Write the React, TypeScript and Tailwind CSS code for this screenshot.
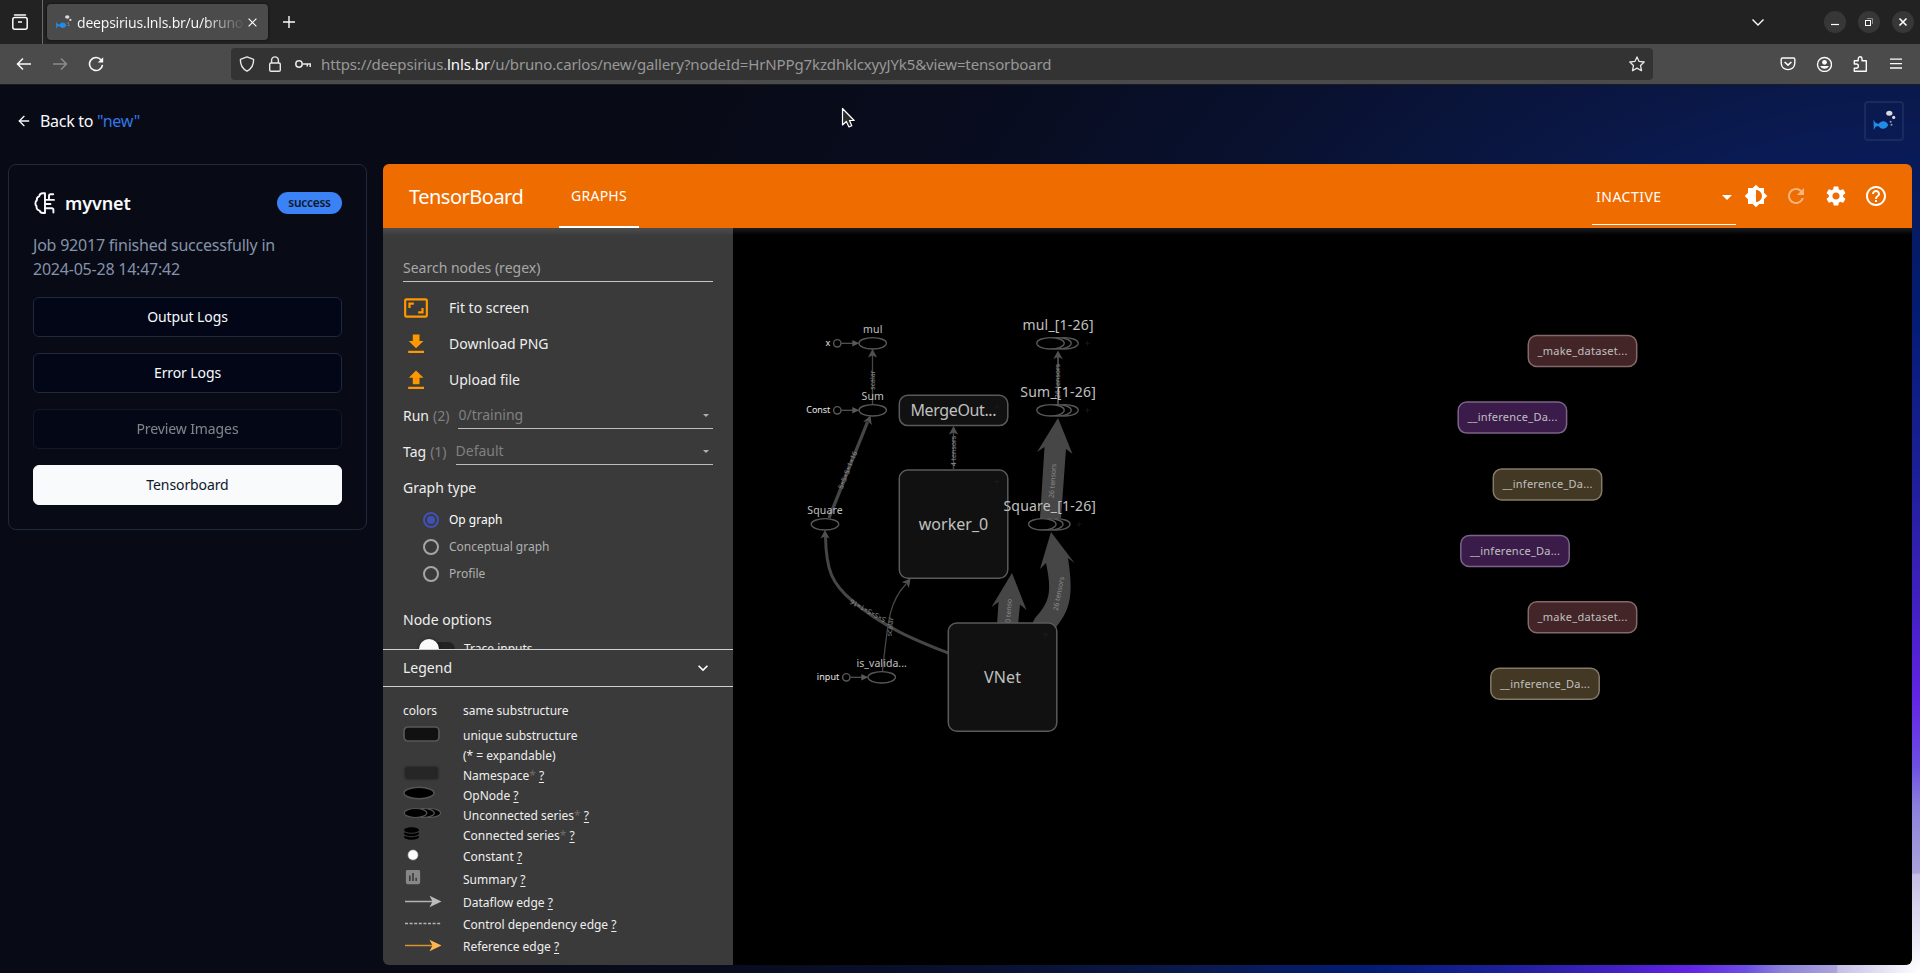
import React from "react";
import { ArrowLeft } from "lucide-react";
import {
  MdBrightness6,
  MdRefresh,
  MdSettings,
  MdHelpOutline,
  MdExpandMore,
  MdAspectRatio,
  MdAssessment,
  MdArrowDropDown,
} from "react-icons/md";

const EDGE = "#464646";

function Fish({ className }: { className: string }) {
  return (
    <svg className={className} viewBox="0 0 24 24">
      <path d="M1.5 10.5 L3.2 13.6 L6.5 15 C8 12.8 10 12 11.8 12.2 C14 12.4 15.6 14 16.3 16 C15.2 18.4 13 20 10.8 19.8 C9 19.8 7.4 18.6 6.5 17 L3.6 17.8 L1.8 21 Z" fill="#228be6" />
      <ellipse cx="17.3" cy="4.2" rx="3.1" ry="2.5" fill="#d8dae0" />
      <circle cx="21.7" cy="8.4" r="1.6" fill="#d8dae0" />
      <circle cx="18.6" cy="12.8" r="1" fill="#9aa0ad" />
      <circle cx="19.5" cy="15.8" r="1" fill="#9aa0ad" />
    </svg>
  );
}

function BrowserTabs() {
  return (
    <div className="flex h-11 items-center bg-[#222222]">
      <div className="flex h-full w-[43px] items-center border-r border-[#6a6a6a] pl-3">
        <svg className="size-4" viewBox="0 0 16 16" fill="none" stroke="#fbfbfe" strokeWidth="1.5">
          <path d="M2.5 .9h11" strokeLinecap="round" />
          <rect x=".8" y="3.5" width="14.4" height="11.7" rx="2" />
          <path d="M6 8h4" />
        </svg>
      </div>
      <div className="ml-1 flex h-9 w-[221px] items-center rounded bg-[#4b4b4b] pl-2 shadow-[0_0_3px_rgba(0,0,0,0.6)]">
        <Fish className="size-[17px] shrink-0" />
        <span className="ml-[5px] w-[169px] whitespace-nowrap bg-gradient-to-r from-[#fbfbfe] from-75% to-[#4b4b4b] bg-clip-text text-[14px] tracking-[-0.22px] text-transparent">
          deepsirius.lnls.br/u/bruno
        </span>
        <svg className="ml-[2px] size-[9px] shrink-0" viewBox="0 0 9 9" stroke="#fbfbfe" strokeWidth="1.2">
          <path d="M.6 .6 L8.4 8.4 M8.4 .6 L.6 8.4" />
        </svg>
      </div>
      <svg className="ml-[15px] size-3" viewBox="0 0 12 12" stroke="#fbfbfe" strokeWidth="1.4">
        <path d="M6 0V12M0 6H12" />
      </svg>
      <svg className="ml-auto mr-[60px] h-[7px] w-3" viewBox="0 0 12 7" fill="none" stroke="#fbfbfe" strokeWidth="1.4">
        <path d="M.5 .5 L6 6 L11.5 .5" />
      </svg>
      <div className="flex gap-3 pr-[6px]">
        <div className="flex size-[22px] items-center justify-center rounded-full bg-[#373737]">
          <svg className="size-3" viewBox="0 0 12 12" stroke="#fff" strokeWidth="1.2"><path d="M2 8.5H10" /></svg>
        </div>
        <div className="flex size-[22px] items-center justify-center rounded-full bg-[#373737]">
          <svg className="size-3" viewBox="0 0 12 12" fill="none">
            <rect x="2.5" y="4.5" width="5" height="5" stroke="#fff" />
            <path d="M4 2.5H9.5V8" stroke="#8a8a8a" />
          </svg>
        </div>
        <div className="flex size-[22px] items-center justify-center rounded-full bg-[#373737]">
          <svg className="size-3" viewBox="0 0 12 12" stroke="#fff" strokeWidth="1.6"><path d="M2.5 2.5L9.5 9.5M9.5 2.5L2.5 9.5" /></svg>
        </div>
      </div>
    </div>
  );
}

function BrowserToolbar() {
  return (
    <div className="flex h-[41px] items-center border-b border-[#1c1c1c] bg-[#4b4b4b]">
      <svg className="ml-4 size-4" viewBox="0 0 16 16" fill="none" stroke="#fbfbfe" strokeWidth="1.5">
        <path d="M15 8H1.5M7 2.5L1.5 8L7 13.5" />
      </svg>
      <svg className="ml-5 size-4" viewBox="0 0 16 16" fill="none" stroke="#8c8c8c" strokeWidth="1.5">
        <path d="M1 8H14.5M9 2.5L14.5 8L9 13.5" />
      </svg>
      <svg className="ml-5 size-4" viewBox="0 0 16 16" fill="none" stroke="#fbfbfe" strokeWidth="1.6">
        <path d="M13 3.8A6.5 6.5 0 1 0 14.5 8.8" />
        <path d="M15.2 1.2V6.6H9.8Z" fill="#fbfbfe" stroke="none" />
      </svg>
      <div className="ml-[127px] flex h-8 w-[1422px] items-center rounded bg-[#333333] pl-2">
        <svg className="size-4" viewBox="0 0 16 16" fill="none" stroke="#e8e8ea" strokeWidth="1.4">
          <path d="M8 .9L14.6 3.3C14.8 9 12.6 12.8 8 15.2C3.4 12.8 1.2 9 1.4 3.3Z" strokeLinejoin="round" />
        </svg>
        <svg className="ml-3 size-4" viewBox="0 0 16 16" fill="none" stroke="#e8e8ea" strokeWidth="1.4">
          <rect x="2.7" y="7" width="10.6" height="8.2" rx="1.3" />
          <path d="M4.6 7V4.2C4.6 -.2 11.4 -.2 11.4 4.2V7" />
        </svg>
        <svg className="ml-3 size-4" viewBox="0 0 16 16" fill="none" stroke="#e8e8ea" strokeWidth="1.5">
          <circle cx="4" cy="8" r="3.2" />
          <path d="M7.2 8H15.3V11M12.3 8V10.5" />
        </svg>
        <div className="ml-[10px] whitespace-nowrap text-[15px] tracking-[-0.135px] text-[#989898]">
          https://deepsirius.<span className="text-[#fbfbfe]">lnls.br</span>/u/bruno.carlos/new/gallery?nodeId=HrNPPg7kzdhklcxyyJYk5&amp;view=tensorboard
        </div>
        <svg className="ml-auto mr-2 size-4" viewBox="0 0 16 16" fill="none" stroke="#e8e8ea" strokeWidth="1.3" strokeLinejoin="round">
          <path d="M8 .9L10.1 5.4L15.2 6L11.5 9.4L12.5 14.7L8 12.1L3.5 14.7L4.5 9.4L.8 6L5.9 5.4Z" />
        </svg>
      </div>
      <div className="ml-auto flex items-center gap-5 pr-4">
        <svg className="size-4" viewBox="0 0 16 16" fill="none" stroke="#fbfbfe" strokeWidth="1.4">
          <path d="M2.4 2H13.6Q14.8 2 14.8 3.2V7C14.8 15.8 1.2 15.8 1.2 7V3.2Q1.2 2 2.4 2Z" />
          <path d="M4.6 6L8 9.2L11.4 6" strokeWidth="1.6" />
        </svg>
        <svg className="size-4" viewBox="0 0 16 16" fill="none">
          <circle cx="8.500" cy="8.500" r="7" stroke="#fbfbfe" strokeWidth="1.4" />
          <circle cx="8.500" cy="6.300" r="2.4" fill="#fbfbfe" />
          <path d="M4.2 10.100H12.8C12.1 13.500 4.9 13.500 4.2 10.100Z" fill="#fbfbfe" />
        </svg>
        <svg className="size-4" viewBox="0 0 16 16" fill="none" stroke="#fbfbfe" strokeWidth="1.4" strokeLinejoin="round">
          <path d="M2.300 8V4.8H6.2V3.2C6.2 0 10 0 10 3.2V4.8H14.3V15.2H2.300V12.2H4.300C7.100 12.2 7.100 8 4.300 8Z" />
        </svg>
        <svg className="size-4" viewBox="0 0 16 16" stroke="#fbfbfe" strokeWidth="1.3">
          <path d="M2 3.2H14M2 7.6H14M2 12H14" />
        </svg>
      </div>
    </div>
  );
}

function HalfBrain() {
  return (
    <svg className="size-6" viewBox="0 0 24 24" fill="none" stroke="#f8fafc" strokeWidth="1.9" strokeLinejoin="round" strokeLinecap="round">
      <path d="M12 2.200H9.800C7.800 2.200 6.500 3.500 6.300 5.100C4.300 6 3.500 7.700 3.900 9.300C2 10.900 1.900 13.500 3.500 15.200C3.300 17.600 4.600 19.300 6.600 19.600C7.100 21.200 8.300 22 9.800 22H12Z" />
      <path d="M12 8.900H21M16 8.900V4.700Q16 3.300 17.500 3.300H20.200" />
      <path d="M12 13H17.500" />
      <path d="M12 17.200H18.700Q20.400 17.200 20.400 18.800V21.500" />
    </svg>
  );
}

function JobCard() {
  const button = "flex h-10 items-center justify-center rounded-md border text-sm tracking-[-0.1px]";
  return (
    <div className="flex h-[366px] w-[359px] shrink-0 flex-col gap-4 rounded-lg border border-[#1e293b] p-6">
      <div className="flex h-7 items-center">
        <HalfBrain />
        <span className="ml-2 text-lg font-semibold tracking-[-0.1px] text-[#f8fafc]">myvnet</span>
        <span className="ml-auto flex h-[22px] w-[65px] items-center justify-center rounded-full bg-[#3b82f6] text-xs font-semibold tracking-[-0.3px] text-[#0f172a]">
          success
        </span>
      </div>
      <p className="whitespace-nowrap text-base leading-6 tracking-[-0.22px] text-[#8593a8]">
        Job 92017 finished successfully in
        <br />
        2024-05-28 14:47:42
      </p>
      <div className="flex flex-col gap-4">
        <div className={`${button} border-[#1e293b] bg-[#020617] text-[#f8fafc]`}>Output Logs</div>
        <div className={`${button} border-[#1e293b] bg-[#020617] text-[#f8fafc]`}>Error Logs</div>
        <div className={`${button} border-[#1e293b] bg-[#020617] text-[#f8fafc] opacity-50`}>Preview Images</div>
        <div className={`${button} border-[#f8fafc] bg-[#f8fafc] text-[#0f172a]`}>Tensorboard</div>
      </div>
    </div>
  );
}

function BoardHeader() {
  return (
    <div className="flex h-16 shrink-0 bg-[#ef6c00] text-white">
      <div className="flex w-[176px] items-center pl-[26px] pt-px text-[20px] tracking-[-0.5px]">TensorBoard</div>
      <div className="flex w-20 items-center justify-center border-b-2 border-white pt-px text-sm tracking-[0.25px]">GRAPHS</div>
      <div className="ml-auto mb-[3px] flex w-36 items-center border-b border-white pl-1 pt-[5px] text-sm tracking-[0.5px]">
        INACTIVE
        <MdArrowDropDown className="ml-auto -mr-[3px] size-6" />
      </div>
      <div className="flex items-center gap-4 pl-2 pr-6">
        <MdBrightness6 className="size-6" />
        <MdRefresh className="size-6 text-white/50" />
        <MdSettings className="size-6" />
        <MdHelpOutline className="size-6" />
      </div>
    </div>
  );
}

function SelectRow({ name, count, value }: { name: string; count: string; value: string }) {
  return (
    <div className="flex h-9 items-center text-sm">
      <span>{name}</span>
      <span className="ml-1 text-[#808080]">({count})</span>
      <div className="ml-[9px] flex h-[25px] flex-1 items-center border-b border-[#bdbdbd] text-[#808080]">
        <span className="pb-[2px]">{value}</span>
        <svg className="ml-auto mr-1 h-[3px] w-[6px]" viewBox="0 0 6 3"><path d="M0 0H6L3 3Z" fill="#b0b0b0" /></svg>
      </div>
    </div>
  );
}

function Radio({ label, checked }: { label: string; checked?: boolean }) {
  return (
    <div className={checked ? "flex h-[27px] items-center text-xs text-white" : "flex h-[27px] items-center text-xs text-[#b0b0b0]"}>
      <svg className="mr-[10px] size-4" viewBox="0 0 16 16" fill="none">
        <circle cx="8" cy="8" r="7" strokeWidth="2" stroke={checked ? "#3f51b5" : "#a6a6a6"} />
        {checked && <circle cx="8" cy="8" r="4" fill="#3f51b5" />}
      </svg>
      {label}
    </div>
  );
}

function LegendRow({ h, label, star, help = true, children }: { h: string; label: string; star?: boolean; help?: boolean; children?: React.ReactNode }) {
  return (
    <div className={`flex items-center ${h}`}>
      <svg className="h-6 w-[60px] shrink-0" viewBox="0 0 60 24" fill="none">{children}</svg>
      <span className="tracking-[-0.01px]">
        {label}
        {star && <span className="text-[#6c6c6c]">*</span>}
        {help && <> <span className="underline underline-offset-2">?</span></>}
      </span>
    </div>
  );
}

function Sidebar() {
  return (
    <div className="flex w-[350px] shrink-0 flex-col bg-[#3a3a3a] text-[#eeeeee]">
      <div className="h-[421px] overflow-hidden bg-gradient-to-b from-[#4d4d4d] to-[#3a3a3a] to-[8px] px-5 pt-[26px]">
        <div className="mb-2 flex h-7 items-center border-b border-[#c4c4c4] text-sm text-[#a8a8a8]">Search nodes (regex)</div>
        <div className="flex h-9 items-center text-sm">
          <MdAspectRatio className="mr-5 size-[26px] text-[#ff9800]" />Fit to screen
        </div>
        <div className="flex h-9 items-center text-sm">
          <svg className="mr-5 h-6 w-[26px]" viewBox="0 0 26 24" fill="#ff9800"><path d="M20.500 9H16.500V2.500H9.800V9H5.800L13 16.300ZM5.200 18.700V21H21V18.700Z" /></svg>
          Download PNG
        </div>
        <div className="flex h-9 items-center text-sm">
          <svg className="mr-5 h-6 w-[26px]" viewBox="0 0 26 24" fill="#ff9800"><path d="M9.800 16.300H16.500V9.700H20.500L13 2.500L5.800 9.700H9.800ZM5.200 18.700V21H21V18.700Z" /></svg>
          Upload file
        </div>
        <SelectRow name="Run" count="2" value="0/training" />
        <SelectRow name="Tag" count="1" value="Default" />
        <div className="flex h-9 items-center text-sm">Graph type</div>
        <div className="pl-5">
          <Radio label="Op graph" checked />
          <Radio label="Conceptual graph" />
          <Radio label="Profile" />
        </div>
        <div className="mt-[15px] flex h-9 items-center text-sm">Node options</div>
        <div className="flex items-start pl-4">
          <div className="mt-px flex h-5 w-9">
            <div className="z-10 size-5 shrink-0 rounded-full bg-[#fafafa] shadow-[0_1px_4px_rgba(0,0,0,0.6)]" />
            <div className="-ml-4 mt-[3px] h-[14px] w-8 rounded-full bg-[#222222]" />
          </div>
          <span className="ml-[9px] mt-[3px] text-xs">Trace inputs</span>
        </div>
      </div>
      <div className="flex h-[38px] items-center justify-between border-y border-[#d0d0d0] pl-5 pr-5 text-sm">
        Legend
        <MdExpandMore className="size-5 text-white" />
      </div>
      <div className="px-5 pt-[14px] text-xs">
        <div className="mb-[5px] flex h-5 items-center"><span className="w-[60px]">colors</span>same substructure</div>
        <LegendRow h="h-5" label="unique substructure" help={false}><rect x="1" y="3" width="35" height="14" rx="4" fill="#111" stroke="#585858" strokeWidth="1.7" /></LegendRow>
        <LegendRow h="h-5" label="(* = expandable)" help={false} />
        <LegendRow h="h-5" label="Namespace" star><rect x="1" y="2" width="35" height="14" rx="4" fill="#262626" stroke="#343434" strokeWidth="1.7" /></LegendRow>
        <LegendRow h="h-5" label="OpNode"><ellipse cx="16" cy="9" rx="15" ry="5.700" fill="#000" stroke="#555" strokeWidth="1.500" /></LegendRow>
        <LegendRow h="h-5" label="Unconnected series" star>
          <g fill="#000" stroke="#555" strokeWidth="1.200"><ellipse cx="26.300" cy="9" rx="11.300" ry="4.500" /><ellipse cx="20" cy="9" rx="11.300" ry="4.500" /><ellipse cx="12.500" cy="9" rx="11.300" ry="4.500" /></g>
        </LegendRow>
        <LegendRow h="h-5" label="Connected series" star>
          <g fill="#000" stroke="#3e3e3e" strokeWidth="1"><ellipse cx="8.500" cy="13" rx="8" ry="3.300" /><ellipse cx="8.500" cy="9.500" rx="8" ry="3.300" /><ellipse cx="8.500" cy="6" rx="8" ry="3.300" /></g>
        </LegendRow>
        <LegendRow h="h-[22px]" label="Constant"><circle cx="10" cy="10" r="5" fill="#fff" stroke="#bbb" strokeWidth=".6" /></LegendRow>
        <LegendRow h="h-6" label="Summary"><MdAssessment x={0.5} y={-0.5} size={19} color="#878787" /></LegendRow>
        <LegendRow h="h-[22px]" label="Dataflow edge"><path d="M2 10.500H30" stroke="#b4b4b4" strokeWidth="1.700" /><path d="M38.500 10.500L26.500 4.800L29.500 10.500L26.500 16.200Z" fill="#bbb" /></LegendRow>
        <LegendRow h="h-[22px]" label="Control dependency edge"><path d="M2 10.500H38" stroke="#b4b4b4" strokeWidth="1.400" strokeDasharray="3 1.600" /></LegendRow>
        <LegendRow h="h-[22px]" label="Reference edge"><path d="M2 10.500H30" stroke="#d6952f" strokeWidth="1.700" /><path d="M38.500 10.500L26.500 4.800L29.500 10.500L26.500 16.200Z" fill="#ffb74d" /></LegendRow>
      </div>
    </div>
  );
}

function Label({ x, y, w, size, fill = "#c0c0c0", anchor = "middle", children }: { x: number; y: number; w: number; size: number; fill?: string; anchor?: "middle" | "end"; children: string }) {
  return <text x={x} y={y} textLength={w} fontSize={size} fill={fill} textAnchor={anchor}>{children}</text>;
}

function Op({ x, y }: { x: number; y: number }) {
  return <ellipse cx={x} cy={y} rx="13.700" ry="5.700" fill="#000" stroke="#585858" strokeWidth="1.400" />;
}

function Series({ x, y }: { x: number; y: number }) {
  return (
    <g>
      <path d={`M${x + 34.500} ${y}h5M${x + 37} ${y - 2.500}v5`} stroke="#141414" />
      <Op x={x + 14} y={y} /><Op x={x + 7} y={y} /><Op x={x} y={y} />
    </g>
  );
}

function Input({ x, y, label, w }: { x: number; y: number; label: string; w: number }) {
  return (
    <g>
      <Label x={x - 7} y={y + 2.800} w={w} size={9} fill="#e8e8e8" anchor="end">{label}</Label>
      <path d={`M${x + 4} ${y}H${x + 16}`} stroke="#585858" strokeWidth="1.200" />
      <path d={`M${x + 15} ${y - 3.200}L${x + 22} ${y}L${x + 15} ${y + 3.200}Z`} fill="#585858" />
      <circle cx={x} cy={y} r="3.700" fill="#000" stroke="#585858" strokeWidth="1.400" />
    </g>
  );
}

function Head({ x, y, angle = 0 }: { x: number; y: number; angle?: number }) {
  return <path transform={`translate(${x} ${y}) rotate(${angle})`} d="M0 0L4.600 8.500L0 6.500L-4.600 8.500Z" fill="#505050" />;
}

function EdgeText({ x, y, angle, size = 7, children }: { x: number; y: number; angle: number; size?: number; children: string }) {
  return <text transform={`translate(${x} ${y}) rotate(${angle})`} textAnchor="middle" fontSize={size} fill="#8c8c8c">{children}</text>;
}

function Box({ x, y, w = 108.5, h }: { x: number; y: number; w?: number; h: number }) {
  return (
    <g>
      <rect x={x} y={y} width={w} height={h} rx="8.500" fill="#111" stroke="#5a5a5a" strokeWidth="1.500" />
      <path d={`M${x + w - 13.500} ${y + 11.500}h5M${x + w - 11} ${y + 9}v5`} stroke="#1b1b1b" />
    </g>
  );
}

const functions = [
  { x: 1582.5, y: 351, label: "_make_dataset...", fill: "#432427", stroke: "#84696b" },
  { x: 1512.4, y: 417.6, label: "__inference_Da...", fill: "#3a1b4a", stroke: "#7c6388" },
  { x: 1547.5, y: 484.4, label: "__inference_Da...", fill: "#433824", stroke: "#837a68" },
  { x: 1515, y: 551, label: "__inference_Da...", fill: "#3a1b4a", stroke: "#7c6388" },
  { x: 1582.5, y: 617.3, label: "_make_dataset...", fill: "#432427", stroke: "#84696b" },
  { x: 1545, y: 683.8, label: "__inference_Da...", fill: "#433824", stroke: "#837a68" },
];

function Graph() {
  return (
    <svg className="h-full w-[1179px]" viewBox="733 228 1179 737">
      <defs>
        <linearGradient id="shade" x1="0" x2="0" y1="0" y2="1"><stop stopColor="#1c1c1c" /><stop offset="1" stopColor="#000" /></linearGradient>
      </defs>
      <rect x="733" y="228" width="1179" height="737" fill="#000" />
      <rect x="733" y="228" width="1179" height="7" fill="url(#shade)" />

      <path d="M872.500 405V354" stroke={EDGE} strokeWidth="1.300" />
      <Head x={872.5} y={349} />
      <path d="M829 518L867.500 422" stroke={EDGE} strokeWidth="3.300" />
      <Head x={870.500} y={415.500} angle={21} />
      <path d="M948 653C918 641 886 629 852.500 601C832 584 826 570 825.500 536" fill="none" stroke={EDGE} strokeWidth="3" />
      <Head x={825} y={530} />
      <path d="M882.500 671C888 620 889 602 906 584" fill="none" stroke={EDGE} strokeWidth="1.300" />
      <Head x={910.5} y={578.5} angle={38} />
      <path d="M953.500 469V431" stroke={EDGE} strokeWidth="1.400" />
      <Head x={953.5} y={426} />
      <path d="M1058 404V355" stroke={EDGE} strokeWidth="2" />
      <Head x={1058} y={350.500} />
      <path d="M1040 518L1044.500 447L1037 452L1058 418L1072.500 454L1066 449L1061 518Z" fill={EDGE} />
      <path d="M997 625L998.500 602L991.500 607L1012 573L1026.500 610L1020 604.500L1018 625Z" fill={EDGE} />
      <path d="M1030 628L1035 618C1050 602 1052 592 1046 563L1040 569L1051 532L1074.500 563L1068 558C1074 598 1070 610 1054 630Z" fill={EDGE} />

      <EdgeText x={875} y={380} angle={-90}>scalar</EdgeText>
      <EdgeText x={850} y={471} angle={-68}>5×5×5×1×16</EdgeText>
      <EdgeText x={869} y={608.500} angle={209}>5×5×5×1×16</EdgeText>
      <EdgeText x={892.500} y={627} angle={-84}>scalar</EdgeText>
      <EdgeText x={956} y={451} angle={-90}>4 tensors</EdgeText>
      <EdgeText x={1060} y={381} angle={-90}>26 tensors</EdgeText>
      <EdgeText x={1055} y={481} angle={-86}>26 tensors</EdgeText>
      <EdgeText x={1011} y={611} angle={-86}>0 tenso</EdgeText>
      <EdgeText x={1061} y={594} angle={-79}>26 tensors</EdgeText>

      <Input x={837.3} y={343.3} label="x" w={4.500} />
      <Input x={837.3} y={410.3} label="Const" w={24} />
      <Input x={846.3} y={677.3} label="input" w={22.500} />
      <Op x={872.7} y={343.3} />
      <Label x={872.7} y={332.7} w={19.500} size={10.500}>mul</Label>
      <Op x={872.7} y={410.3} />
      <Label x={872.7} y={400} w={22.500} size={10.500}>Sum</Label>
      <Op x={825} y={524.3} />
      <Label x={825} y={514} w={35.500} size={10.500}>Square</Label>
      <Op x={881.7} y={677.3} />
      <Label x={881.700} y={666.800} w={50.500} size={10.500}>is_valida...</Label>
      <Series x={1050.5} y={343.3} />
      <Label x={1058} y={330.3} w={71} size={14}>mul_[1-26]</Label>
      <Series x={1050.5} y={410.3} />
      <Label x={1058} y={397.3} w={75.500} size={14}>Sum_[1-26]</Label>

      <Box x={899.3} y={395.300} h={30.300} />
      <Label x={953.5} y={416} w={86} size={16}>MergeOut...</Label>
      <Box x={899.3} y={470} h={108.300} />
      <Label x={953.5} y={530} w={69.500} size={16}>worker_0</Label>
      <Box x={948.3} y={623} h={108.300} />
      <Label x={1002.5} y={683} w={37} size={16}>VNet</Label>
      <Series x={1042.3} y={524.3} />
      <Label x={1049.700} y={511.300} w={92.500} size={14}>Square_[1-26]</Label>

      {functions.map((f) => (
        <g key={`${f.x}-${f.y}`}>
          <rect x={f.x - 54.200} y={f.y - 15.500} width="108.400" height="31" rx="8.500" fill={f.fill} stroke={f.stroke} strokeWidth="1.500" />
          <Label x={f.x} y={f.y + 3.800} w={90} size={11}>{f.label}</Label>
        </g>
      ))}
    </svg>
  );
}

export default function App() {
  return (
    <div className="flex h-[973px] w-[1920px] flex-col overflow-hidden font-['Noto_Sans',sans-serif]">
      <BrowserTabs />
      <BrowserToolbar />
      <div className="relative flex flex-1 flex-col bg-[radial-gradient(1440px_1728px_at_100%_100%,#ffffff_0%,#c6bee8_5.7%,#aca4dc_5.8%,#8a7fdc_9.7%,#6d4fe4_12%,#6223e6_16%,#4320c4_21%,#1c1f98_29%,#021c74_38%,#0a1a52_49%,#0a1744_54%,#09112f_66%,#080c1e_82%,#080a16_100%)]">
        <div className="flex h-[79px] shrink-0 items-center justify-between pb-[7px] pl-4 pr-4 pt-0">
          <div className="flex items-center text-base tracking-[-0.3px] text-[#f8fafc]">
            <ArrowLeft className="mr-2 size-4" />
            <span>Back to <span className="text-[#3477e6]">"new"</span></span>
          </div>
          <div className="flex size-10 items-center justify-center rounded border-2 border-[#1a2a5c]">
            <Fish className="size-6" />
          </div>
        </div>
        <div className="flex h-[801px] gap-4 pl-2 pr-2">
          <JobCard />
          <div className="flex w-[1529px] flex-col overflow-hidden rounded-md">
            <BoardHeader />
            <div className="flex min-h-0 flex-1">
              <Sidebar />
              <Graph />
            </div>
          </div>
        </div>
        <svg className="absolute left-[841px] top-[22px] h-[22px] w-[16px]" viewBox="0 0 16 22">
          <path d="M1.500 1.500V18L5.300 14.500L8 20L10.800 18.700L8.500 13.500H13.200Z" fill="#2b2b2b" stroke="#fff" strokeWidth="1.200" strokeLinejoin="round" />
        </svg>
      </div>
    </div>
  );
}
